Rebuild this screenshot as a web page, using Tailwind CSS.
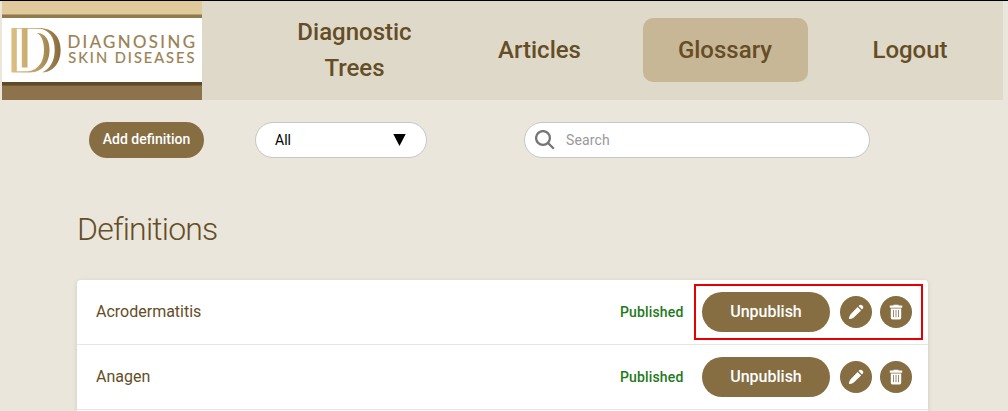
<!DOCTYPE html>
<html lang="en">
<head>
<meta charset="utf-8">
<title>Definitions</title>
<script src="https://cdn.jsdelivr.net/npm/@tailwindcss/browser@4"></script>
</head>
<body class="h-[411px] overflow-hidden bg-[#eae6db] font-['Roboto',sans-serif] text-[#654d26]">
<svg class="hidden">
  <symbol id="pencil" viewBox="0 0 16 16"><path d="M9.6 2.9 13.1 6.4 5.5 13.7Q3.7 15 1 15.1Q1 12.3 2.4 10.4ZM10.5 2 11.7 1Q12.9.2 14 1.2L14.8 2Q15.8 3.1 15 4.2L14 5.5Z" fill="#fff"/></symbol>
  <symbol id="trash" viewBox="0 0 14 16"><path d="M.8 1.6H4.4V.8H9.6V1.6H13.2V3.7H.8ZM1.8 4.4H12.2V13.8Q12.2 15.4 10.7 15.4H3.3Q1.8 15.4 1.8 13.8Z" fill="#fff"/><path d="M4.5 6V13.2M7 6V13.2M9.5 6V13.2" stroke="#866d42" stroke-width=".8"/></symbol>
</svg>
<div class="h-px bg-black"></div>
<header class="mr-[5px] ml-[2px] flex h-[99px] bg-[#dfd9c9]">
  <div class="flex w-[200px] flex-col">
    <div class="h-[13px] bg-[#e0ca9c]"></div>
    <div class="h-[4px] border-t border-[#b7a071] bg-[#8f7a4c]"></div>
    <svg class="h-16 w-[200px] bg-white" viewBox="2 18 200 64">
      <defs>
        <linearGradient id="gold" gradientUnits="userSpaceOnUse" x1="11" y1="0" x2="61" y2="0"><stop offset="0" stop-color="#dfc084"/><stop offset=".5" stop-color="#bda166"/><stop offset="1" stop-color="#85693a"/></linearGradient>
      </defs>
      <g fill="url(#gold)">
        <path d="M11.4 28H40V28.7H27.5V67.5H21.8V28.7H16.8V71.2H28C39 70 44 61 44 50C44 42 42 36 37 33C46 33 49.5 41 49.5 50C49.5 63 42 72.4 30 72.4H11.4Z"/>
        <path d="M39 28C53 28 60.6 37 60.6 50C60.6 63 53 72.4 42 72.4C50 69 54.7 61 54.7 50C54.7 37 49 30 39 28.6Z"/>
      </g>
      <g fill="#9a8151" stroke="#9a8151" stroke-width=".2" font-family="Lato, sans-serif">
        <text x="67.4" y="47.8" font-size="16.8" textLength="127.5">DIAGNOSING</text>
        <text x="68.3" y="63.4" font-size="14.6" textLength="126">SKIN DISEASES</text>
      </g>
    </svg>
    <div class="h-[4px] border-b border-[#725a32] bg-[#604a26]"></div>
    <div class="h-[14px] bg-[#8c734b]"></div>
  </div>
  <nav class="flex h-[97px] items-center pl-[70px] text-center text-2xl leading-9 font-medium">
    <a class="w-[165px]">Diagnostic<br>Trees</a>
    <a class="ml-[20px] w-[165px]">Articles</a>
    <a class="ml-[21px] flex h-16 w-[165px] items-center justify-center rounded-[10px] bg-[#c8b796] pr-px">Glossary</a>
    <a class="ml-[20px] w-[165px] pr-px">Logout</a>
  </nav>
</header>
<section class="mt-[22px] flex h-9 pl-[89px]">
  <button class="w-[115px] rounded-full bg-[#866d42] pb-0.5 text-sm font-medium text-white">Add definition</button>
  <div class="ml-[51px] flex w-[172px] items-center justify-between rounded-full border border-[#c6c6c6] bg-white pr-[20px] pl-[19px] text-sm text-black">All
    <svg class="mb-px h-3 w-[13px]" viewBox="0 0 13 12"><path d="M.3 0H12.7L6.5 12Z"/></svg>
  </div>
  <div class="ml-[97px] flex w-[346px] items-center rounded-full border border-[#c6c6c6] bg-white pl-[10px] text-sm tracking-[.15px] text-[#999]">
    <svg class="mr-[11px] h-5 w-5" viewBox="0 0 20 20" fill="none" stroke="#757575" stroke-width="2.3"><circle cx="8" cy="8" r="6.9"/><path d="m12.8 12.8 6 6"/></svg>Search
  </div>
</section>
<main class="ml-[77px] w-[851px]">
  <h1 class="mt-[50px] h-[43px] text-[32px] leading-[43px] font-light tracking-[-.8px]">Definitions</h1>
  <div class="relative mt-[29px] h-[131px] rounded-t-[4px] bg-white shadow-[0_1px_5px_rgba(0,0,0,.12)]">
    <div class="flex h-[65px] items-center border-b border-[#e6e6e6] pr-4 pl-[19px]">
      <span class="flex-1 pb-px text-base">Acrodermatitis</span>
      <span class="w-[82px] text-sm font-medium tracking-[.15px] text-[#217a1b]">Published</span>
      <button class="h-10 w-32 rounded-full bg-[#866d42] pb-px text-base font-medium text-white">Unpublish</button>
      <button class="ml-[10px] flex size-8 items-center justify-center rounded-full bg-[#866d42]"><svg class="size-4"><use href="#pencil"/></svg></button>
      <button class="ml-2 flex size-8 items-center justify-center rounded-full bg-[#866d42]"><svg class="h-4 w-3.5"><use href="#trash"/></svg></button>
    </div>
    <div class="flex h-[65px] items-center border-b border-[#e6e6e6] pr-4 pl-[19px]">
      <span class="flex-1 pb-px text-base">Anagen</span>
      <span class="w-[82px] text-sm font-medium tracking-[.15px] text-[#217a1b]">Published</span>
      <button class="h-10 w-32 rounded-full bg-[#866d42] pb-px text-base font-medium text-white">Unpublish</button>
      <button class="ml-[10px] flex size-8 items-center justify-center rounded-full bg-[#866d42]"><svg class="size-4"><use href="#pencil"/></svg></button>
      <button class="ml-2 flex size-8 items-center justify-center rounded-full bg-[#866d42]"><svg class="h-4 w-3.5"><use href="#trash"/></svg></button>
    </div>
    <div class="absolute top-[4px] left-[617px] h-[56px] w-[229px] border-2 border-[#e60000]"></div>
  </div>
</main>
</body>
</html>
